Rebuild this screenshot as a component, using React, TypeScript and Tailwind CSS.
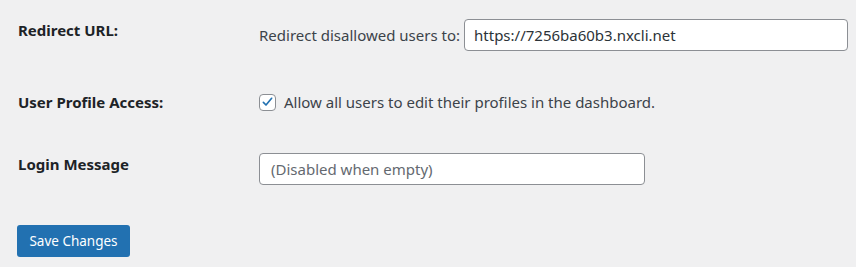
export default function App() {
  return (
    <div
      className="min-h-screen w-full bg-[#f0f0f1] pl-[18px] text-[15px] text-[#3c434a]"
      style={{ fontFamily: '"Noto Sans", "Open Sans", sans-serif' }}
    >
      {/* Redirect URL */}
      <div className="flex pt-[19px]">
        <div className="w-[241px] pt-[1px] font-bold leading-5 text-[#1d2327]">Redirect URL:</div>
        <div className="flex items-center">
          <span className="leading-5">Redirect disallowed users to:</span>
          <input
            type="text"
            defaultValue="https://7256ba60b3.nxcli.net"
            className="ml-[4px] h-[32px] w-[384px] rounded-[4px] border border-[#8c8f94] bg-white px-[9px] text-[15px] text-[#2c3338] outline-none"
          />
        </div>
      </div>

      {/* User Profile Access */}
      <div className="flex pt-[41px]">
        <div className="w-[241px] font-bold leading-5 text-[#1d2327]">User Profile Access:</div>
        <label className="flex items-center">
          <span className="flex h-[17px] w-[17px] items-center justify-center rounded-[4px] border border-[#8c8f94] bg-white">
            <svg viewBox="0 0 20 20" className="h-[16px] w-[16px]">
              <path d="M4.5 10.5l3.5 3.5 7.5-9" fill="none" stroke="#2271b1" strokeWidth="2.2" strokeLinecap="round" strokeLinejoin="round" />
            </svg>
          </span>
          <span className="ml-[8px] leading-5">Allow all users to edit their profiles in the dashboard.</span>
        </label>
      </div>

      {/* Login Message */}
      <div className="flex pt-[41px]">
        <div className="w-[241px] pt-[1px] font-bold leading-5 text-[#1d2327]">Login Message</div>
        <input
          type="text"
          placeholder="(Disabled when empty)"
          className="h-[32px] w-[386px] rounded-[4px] border border-[#8c8f94] bg-white px-[11px] text-[15px] text-[#2c3338] placeholder:text-[#646970] outline-none"
        />
      </div>

      <div className="pt-[40px]">
        <button className="-ml-[1px] h-[32px] w-[113px] rounded-[3px] bg-[#2271b1] text-[13.5px] text-white">
          Save Changes
        </button>
      </div>
    </div>
  );
}
